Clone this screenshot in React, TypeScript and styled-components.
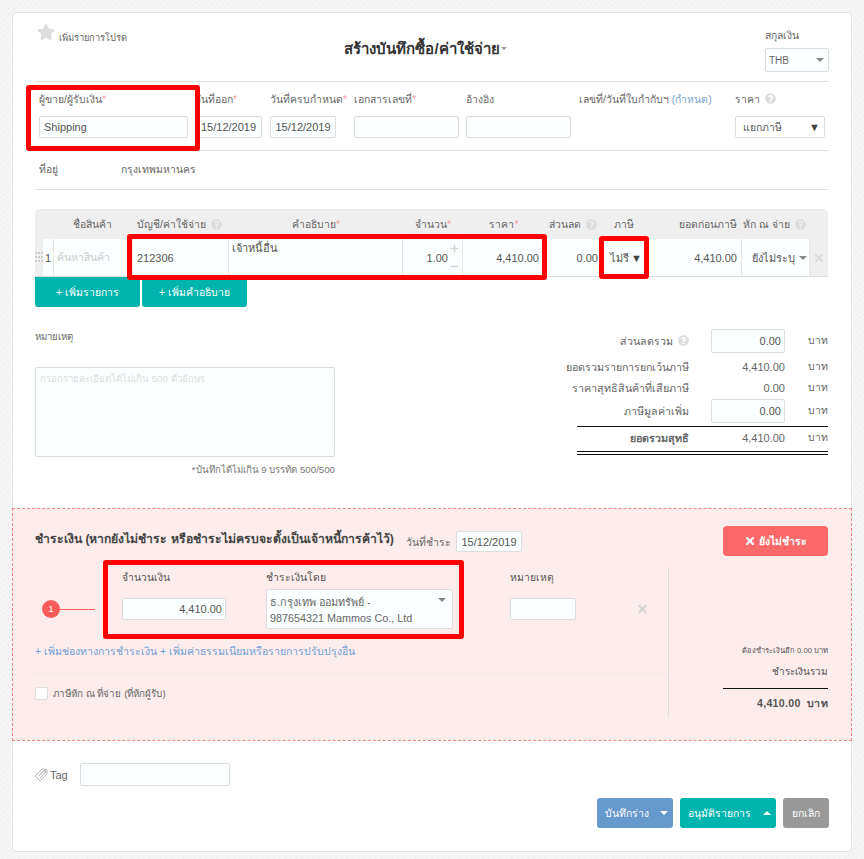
import React from "react";
import styled, { createGlobalStyle } from "styled-components";
import { FaStar, FaQuestionCircle, FaTimes, FaPlus, FaMinus } from "react-icons/fa";

const GlobalStyle = createGlobalStyle`
  html, body {
    margin: 0;
    padding: 0;
  }

  body {
    background-color: #f6f6f6;
    background-image: repeating-linear-gradient(135deg, #f1f1f1 0 1px, transparent 1px 4px);
    font-family: "Liberation Sans", "Noto Sans", sans-serif;
    font-size: 10.4px;
    color: #666;
  }

  * {
    box-sizing: border-box;
  }
`;

const Page = styled.div`
  padding: 12px;
  height: 859px;
  overflow: hidden;
`;

const Card = styled.div`
  position: relative;
  width: 840px;
  height: 840px;
  background: #fff;
  border: 1px solid #e3e3e3;
  border-radius: 5px;
`;

const Highlight = styled.div<{ $x: number; $y: number; $w: number; $h: number }>`
  position: absolute;
  left: ${(p) => p.$x - 13}px;
  top: ${(p) => p.$y - 13}px;
  width: ${(p) => p.$w}px;
  height: ${(p) => p.$h}px;
  border: 5px solid #fe0000;
  border-radius: 3px;
  pointer-events: none;
`;

const Top = styled.div`
  padding: 0 23px 0 22px;
`;

const Header = styled.div`
  display: flex;
  height: 69px;
  border-bottom: 1px solid #ddd;
`;

const Favorite = styled.div`
  width: 110px;
  display: flex;
  align-items: flex-start;
  padding: 10px 0 0 2px;
  font-size: 9.3px;
  color: #666;
  white-space: nowrap;

  svg {
    color: #ddd;
    font-size: 18px;
    margin-right: 4px;
  }

  span {
    margin-top: 7px;
  }
`;

const Title = styled.div`
  flex: 1;
  padding-top: 24px;
  padding-right: 59px;
  text-align: center;
  font-size: 15px;
  font-weight: bold;
  color: #333;
`;

const TitleCaret = styled.i`
  display: inline-block;
  margin-left: 1px;
  vertical-align: 4px;
  border-left: 3px solid transparent;
  border-right: 3px solid transparent;
  border-top: 3px solid #999;
`;

const Currency = styled.div`
  width: 64px;
  padding-top: 14px;
  margin-right: -1px;
  color: #666;
`;

const CurrencySelect = styled.div`
  display: flex;
  align-items: center;
  justify-content: space-between;
  height: 24px;
  margin-top: 4px;
  padding: 0 4px 0 3px;
  background: #fbffff;
  border: 1px solid #ddd;
  border-radius: 2px;
  font-size: 10px;
  color: #666;
`;

const Caret = styled.i`
  display: block;
  flex: none;
  border-left: 4px solid transparent;
  border-right: 4px solid transparent;
  border-top: 4px solid #888;
`;

const FieldRow = styled.div`
  display: flex;
  height: 69px;
  padding-top: 10px;
  border-bottom: 1px solid #ddd;
`;

const Field = styled.div<{ $width: number; $left: number }>`
  width: ${(p) => p.$width}px;
  margin-left: ${(p) => p.$left}px;
  flex: none;
`;

const Label = styled.div`
  height: 24px;
  line-height: 16px;
  white-space: nowrap;
  color: #666;
`;

const Req = styled.span`
  color: #f5a3a3;
`;

const Link = styled.span`
  color: #7aa3cc;
`;

const Input = styled.div<{ $align?: string }>`
  display: flex;
  align-items: center;
  justify-content: ${(p) => p.$align || "flex-start"};
  height: 22px;
  padding: 0 4px;
  background: #fbffff;
  border: 1px solid #ddd;
  border-radius: 2px;
  font-size: 11px;
  color: #555;
  white-space: nowrap;
`;

const NativeSelect = styled(Input)`
  justify-content: space-between;
  padding: 0 4px 0 7px;
  background: #fff;
  font-size: 10.4px;
`;

const Glyph = styled.span`
  font-size: 11px;
  color: #444;
`;

const Help = styled(FaQuestionCircle)`
  color: #ddd;
  font-size: 11px;
  margin-left: 5px;
  vertical-align: -1px;
`;

const AddressRow = styled.div`
  display: flex;
  align-items: center;
  height: 39px;
  padding: 0 0 2px 4px;
  border-bottom: 1px solid #ddd;
  color: #666;

  span:first-child {
    width: 82px;
  }
`;

const LineTable = styled.div`
  margin-top: 19px;
  border-top: 1px solid #e6e6e6;
  border-radius: 5px 5px 0 0;
  overflow: hidden;
`;

const tableColumns = "8px 11px 79px 96px 174px 60px 82px 55px 48px 94px 68px 18px";

const HeadRow = styled.div`
  display: grid;
  grid-template-columns: ${tableColumns};
  height: 29px;
  background: #efefef;
  color: #666;
`;

const HeadCell = styled.div<{ $span?: number; $align?: string; $pad?: string }>`
  grid-column: span ${(p) => p.$span || 1};
  display: flex;
  align-items: center;
  justify-content: ${(p) => p.$align || "center"};
  padding: ${(p) => p.$pad || "0"};
  white-space: nowrap;
`;

const BodyRow = styled.div`
  display: grid;
  grid-template-columns: ${tableColumns};
  height: 38px;
  border-bottom: 1px solid #ddd;
  background: #fbffff;
`;

const Grip = styled.div`
  display: grid;
  grid-template-columns: repeat(3, 2px);
  grid-auto-rows: 2px;
  gap: 2px 1px;
  align-content: center;
  padding-bottom: 2px;
  background: #efefef;
`;

const GripDot = styled.i`
  background: #ccc;
`;

const Cell = styled.div<{ $align?: string; $start?: boolean; $pad?: string }>`
  display: flex;
  align-items: ${(p) => (p.$start ? "flex-start" : "center")};
  justify-content: ${(p) => p.$align || "flex-start"};
  padding: ${(p) => p.$pad || "0 3px"};
  border-right: 1px solid #e6e6e6;
  font-size: 11px;
  white-space: nowrap;
  overflow: hidden;
  color: #555;
`;

const Placeholder = styled.span`
  color: #ccc;
  font-size: 10.6px;
`;

const Stepper = styled.div`
  display: flex;
  flex-direction: column;
  justify-content: space-between;
  align-self: stretch;
  padding: 5px 0;
  margin-left: 2px;
  color: #d5d5d5;
  font-size: 9px;
`;

const DeleteCell = styled.div`
  display: flex;
  align-items: center;
  justify-content: center;
  background: #efefef;
  color: #ddd;
  font-size: 12px;
`;

const AddButtons = styled.div`
  display: flex;
  gap: 2px;
`;

const AddButton = styled.div`
  display: flex;
  align-items: center;
  justify-content: center;
  width: 105px;
  height: 30px;
  background: #00b5ad;
  border-radius: 0 0 3px 3px;
  color: #fff;
`;

const Middle = styled.div`
  display: flex;
  justify-content: space-between;
  height: 201px;
`;

const Notes = styled.div`
  width: 300px;
  padding-top: 22px;
  font-size: 9.7px;
  color: #666;
`;

const NoteLabel = styled.div`
  height: 38px;
`;

const NoteArea = styled.div`
  height: 90px;
  padding: 3px 4px;
  background: #fbffff;
  border: 1px solid #ddd;
  border-radius: 2px;
  color: #ddd;
`;

const NoteHint = styled.div`
  margin-top: 5px;
  text-align: right;
  color: #777;
`;

const Summary = styled.div`
  width: 293px;
  padding-top: 22px;
  display: grid;
  grid-template-columns: 154px 96px 43px;
  grid-auto-rows: auto;
  align-items: center;
  align-content: start;
  line-height: 14px;
  color: #666;
`;

const SumLabel = styled.div<{ $bold?: boolean }>`
  text-align: right;
  white-space: nowrap;
  font-size: 10.7px;
  font-weight: ${(p) => (p.$bold ? "bold" : "normal")};
`;

const SumValue = styled.div`
  display: flex;
  justify-content: flex-end;
  font-size: 11px;
`;

const SumInput = styled(Input)`
  width: 74px;
  height: 24px;
  justify-content: flex-end;
  padding: 0 3px 0 4px;
`;

const SumUnit = styled.div`
  text-align: right;
`;

const SumSpacer = styled.div<{ $height: number }>`
  grid-column: 1 / -1;
  height: ${(p) => p.$height}px;
`;

const SumRule = styled.div`
  grid-column: 1 / -1;
  height: 1px;
  margin-left: 42px;
  background: #111;
`;

const SumDouble = styled.div`
  grid-column: 1 / -1;
  height: 4px;
  margin-left: 42px;
  border-top: 1px solid #111;
  border-bottom: 1px solid #111;
`;

const Payment = styled.div`
  height: 233px;
  margin: 0 -1px;
  padding: 17px 23px 0 22px;
  background: #fdecec;
  border: 1px dashed #e88;
`;

const PayHead = styled.div`
  display: flex;
  align-items: flex-start;
  height: 30px;
`;

const PayTitle = styled.div`
  width: 371px;
  padding-top: 3px;
  font-size: 12.2px;
  font-weight: bold;
  color: #444;
  white-space: nowrap;
`;

const PayDateLabel = styled.div`
  width: 50px;
  padding-top: 8px;
  white-space: nowrap;
  color: #666;
`;

const PayDate = styled(Input)`
  width: 66px;
  height: 21px;
  margin-top: 5px;
  justify-content: center;
  padding: 0;
`;

const UnpaidButton = styled.div`
  margin-left: auto;
  width: 105px;
  height: 30px;
  display: flex;
  align-items: center;
  justify-content: center;
  gap: 3px;
  background: #fa6868;
  border-radius: 4px;
  color: #fff;
  font-weight: bold;

  svg {
    font-size: 12px;
  }
`;

const PayBody = styled.div`
  display: flex;
  height: 150px;
  margin-top: 11px;
`;

const PayLeft = styled.div`
  width: 635px;
  border-right: 1px solid #ddd;
`;

const PayRow = styled.div`
  display: flex;
  height: 62px;
`;

const Step = styled.div`
  display: flex;
  align-items: center;
  width: 53px;
  height: 40px;
  margin: 22px 0 0 7px;
`;

const Badge = styled.div`
  flex: none;
  width: 18px;
  height: 18px;
  display: flex;
  align-items: center;
  justify-content: center;
  background: #fa5c5c;
  border-radius: 50%;
  color: #fff;
  font-size: 9px;
`;

const StepLine = styled.div`
  flex: 1;
  height: 1px;
  background: #fa5c5c;
`;

const PayField = styled.div<{ $width: number; $left: number }>`
  width: ${(p) => p.$width}px;
  margin-left: ${(p) => p.$left}px;
  flex: none;
`;

const PayLabel = styled.div`
  height: 22px;
  line-height: 21px;
  color: #555;
`;

const Control = styled.div`
  height: 40px;
  display: flex;
  align-items: center;
`;

const PayInput = styled(Input)`
  width: 100%;
  padding: 0 3px;
`;

const BankSelect = styled.div`
  position: relative;
  width: 100%;
  height: 40px;
  padding: 4px 3px 0;
  background: #fbffff;
  border: 1px solid #ddd;
  border-radius: 2px;
  line-height: 16px;
  color: #666;
  font-size: 10.8px;
  white-space: nowrap;

  ${Caret} {
    position: absolute;
    top: 8px;
    right: 6px;
  }
`;

const RemoveX = styled.div`
  width: 11px;
  height: 40px;
  margin: 22px 0 0 61px;
  display: flex;
  align-items: center;
  color: #d5d5d5;
  font-size: 12px;
`;

const PayLinks = styled.div`
  height: 45px;
  padding-top: 14px;
  border-bottom: 1px solid #f3e6e6;
  font-size: 10.6px;
  color: #6f9fd4;
`;

const CheckRow = styled.div`
  display: flex;
  align-items: center;
  gap: 5px;
  padding-top: 12px;
  font-size: 9.8px;
  color: #666;
`;

const CheckBox = styled.i`
  flex: none;
  width: 13px;
  height: 13px;
  background: #fff;
  border: 1px solid #ddd;
  border-radius: 2px;
`;

const PayTotal = styled.div`
  width: 105px;
  margin-left: 54px;
  padding-top: 77px;
  text-align: right;
  color: #555;
`;

const DueNote = styled.div`
  font-size: 7.6px;
  height: 14px;
  white-space: nowrap;
`;

const TotalLabel = styled.div`
  height: 31px;
  padding-top: 6px;
  border-bottom: 1px solid #111;
  font-size: 10px;
`;

const TotalValue = styled.div`
  padding-top: 6px;
  font-weight: bold;
  font-size: 10.6px;
  letter-spacing: 0.3px;
  white-space: nowrap;
`;

const Footer = styled.div`
  padding: 22px 22px 0 21px;
`;

const TagRow = styled.div`
  display: flex;
  align-items: center;
  height: 23px;
  font-size: 11px;
  color: #666;

  svg {
    color: #bbb;
    margin-right: 2px;
  }
`;

const TagInput = styled(Input)`
  width: 150px;
  height: 23px;
  margin-left: 12px;
`;

const Actions = styled.div`
  display: flex;
  justify-content: flex-end;
  gap: 7px;
  margin-top: 12px;
`;

const Action = styled.div<{ $color: string; $width: number; $center?: boolean }>`
  display: flex;
  align-items: center;
  justify-content: ${(p) => (p.$center ? "center" : "space-between")};
  width: ${(p) => p.$width}px;
  height: 30px;
  padding: ${(p) => (p.$center ? "0" : "0 5px 0 8px")};
  background: ${(p) => p.$color};
  border-radius: 3px;
  color: #fff;
  white-space: nowrap;
`;

const WhiteDown = styled.i`
  border-left: 4px solid transparent;
  border-right: 4px solid transparent;
  border-top: 4px solid #fff;
`;

const WhiteUp = styled.i`
  border-left: 4px solid transparent;
  border-right: 4px solid transparent;
  border-bottom: 4px solid #fff;
`;

const TagIcon = () => (
  <svg width="14" height="14" viewBox="0 0 14 14" fill="none" stroke="currentColor" strokeWidth="1">
    <path d="M13 1.5 8 1 1 8l5 5 7-7z" />
    <path d="M11.5 1 4 8.5M13 3 5.5 10.5" />
    <circle cx="10.8" cy="3.2" r="0.8" />
  </svg>
);

const App = (): JSX.Element => {
  return (
    <Page>
      <GlobalStyle />
      <Card>
        <Top>
          <Header>
            <Favorite>
              <FaStar />
              <span>เพิ่มรายการโปรด</span>
            </Favorite>
            <Title>
              สร้างบันทึกซื้อ/ค่าใช้จ่าย
              <TitleCaret />
            </Title>
            <Currency>
              สกุลเงิน
              <CurrencySelect>
                THB
                <Caret />
              </CurrencySelect>
            </Currency>
          </Header>

          <FieldRow>
            <Field $width={149} $left={4}>
              <Label>
                ผู้ขาย/ผู้รับเงิน<Req>*</Req>
              </Label>
              <Input>Shipping</Input>
            </Field>
            <Field $width={67} $left={7}>
              <Label>
                วันที่ออก<Req>*</Req>
              </Label>
              <Input $align="center">15/12/2019</Input>
            </Field>
            <Field $width={66} $left={8}>
              <Label>
                วันที่ครบกำหนด<Req>*</Req>
              </Label>
              <Input $align="center">15/12/2019</Input>
            </Field>
            <Field $width={105} $left={18}>
              <Label>
                เอกสารเลขที่<Req>*</Req>
              </Label>
              <Input />
            </Field>
            <Field $width={105} $left={7}>
              <Label>อ้างอิง</Label>
              <Input />
            </Field>
            <Field $width={150} $left={8}>
              <Label>
                เลขที่/วันที่ใบกำกับฯ <Link>(กำหนด)</Link>
              </Label>
            </Field>
            <Field $width={90} $left={6}>
              <Label>
                ราคา
                <Help />
              </Label>
              <NativeSelect>
                แยกภาษี
                <Glyph>▼</Glyph>
              </NativeSelect>
            </Field>
          </FieldRow>

          <AddressRow>
            <span>ที่อยู่</span>
            <span>กรุงเทพมหานคร</span>
          </AddressRow>

          <LineTable>
            <HeadRow>
              <HeadCell $span={3} $pad="0 0 0 17px">
                ชื่อสินค้า
              </HeadCell>
              <HeadCell $align="flex-start" $pad="0 0 0 4px">
                บัญชี/ค่าใช้จ่าย
                <Help />
              </HeadCell>
              <HeadCell>
                คำอธิบาย<Req>*</Req>
              </HeadCell>
              <HeadCell>
                จำนวน<Req>*</Req>
              </HeadCell>
              <HeadCell>
                ราคา<Req>*</Req>
              </HeadCell>
              <HeadCell>
                ส่วนลด
                <Help />
              </HeadCell>
              <HeadCell>ภาษี</HeadCell>
              <HeadCell $align="flex-end" $pad="0 5px 0 0">
                ยอดก่อนภาษี
              </HeadCell>
              <HeadCell $span={2} $align="flex-start" $pad="0 0 0 1px">
                หัก ณ จ่าย
                <Help />
              </HeadCell>
            </HeadRow>
            <BodyRow>
              <Grip>
                {Array.from({ length: 9 }).map((_, i) => (
                  <GripDot key={i} />
                ))}
              </Grip>
              <Cell $align="center" $pad="0">
                1
              </Cell>
              <Cell>
                <Placeholder>ค้นหาสินค้า</Placeholder>
              </Cell>
              <Cell $pad="0 3px 0 4px">212306</Cell>
              <Cell $start>เจ้าหนี้อื่น</Cell>
              <Cell $align="flex-end">
                1.00
                <Stepper>
                  <FaPlus />
                  <FaMinus />
                </Stepper>
              </Cell>
              <Cell $align="flex-end" $pad="0 5px 0 0">
                4,410.00
              </Cell>
              <Cell $align="flex-end" $pad="0 1px 0 0">
                0.00
              </Cell>
              <Cell $align="space-between" $pad="0 5px 0 10px">
                ไม่รี
                <Glyph>▼</Glyph>
              </Cell>
              <Cell $align="flex-end" $pad="0 4px 0 0">
                4,410.00
              </Cell>
              <Cell $align="space-between" $pad="0 2px 0 10px">
                ยังไม่ระบุ
                <Caret />
              </Cell>
              <DeleteCell>
                <FaTimes />
              </DeleteCell>
            </BodyRow>
          </LineTable>

          <AddButtons>
            <AddButton>+ เพิ่มรายการ</AddButton>
            <AddButton>+ เพิ่มคำอธิบาย</AddButton>
          </AddButtons>

          <Middle>
            <Notes>
              <NoteLabel>หมายเหตุ</NoteLabel>
              <NoteArea>กรอกรายละเอียดได้ไม่เกิน 500 ตัวอักษร</NoteArea>
              <NoteHint>*บันทึกได้ไม่เกิน 9 บรรทัด 500/500</NoteHint>
            </Notes>
            <Summary>
              <SumLabel>
                ส่วนลดรวม
                <Help />
              </SumLabel>
              <SumValue>
                <SumInput>0.00</SumInput>
              </SumValue>
              <SumUnit>บาท</SumUnit>
              <SumSpacer $height={7} />
              <SumLabel>ยอดรวมรายการยกเว้นภาษี</SumLabel>
              <SumValue>4,410.00</SumValue>
              <SumUnit>บาท</SumUnit>
              <SumSpacer $height={7} />
              <SumLabel>ราคาสุทธิสินค้าที่เสียภาษี</SumLabel>
              <SumValue>0.00</SumValue>
              <SumUnit>บาท</SumUnit>
              <SumSpacer $height={4} />
              <SumLabel>ภาษีมูลค่าเพิ่ม</SumLabel>
              <SumValue>
                <SumInput>0.00</SumInput>
              </SumValue>
              <SumUnit>บาท</SumUnit>
              <SumSpacer $height={3} />
              <SumRule />
              <SumSpacer $height={4} />
              <SumLabel $bold>ยอดรวมสุทธิ</SumLabel>
              <SumValue>4,410.00</SumValue>
              <SumUnit>บาท</SumUnit>
              <SumSpacer $height={6} />
              <SumDouble />
            </Summary>
          </Middle>
        </Top>

        <Payment>
          <PayHead>
            <PayTitle>ชำระเงิน (หากยังไม่ชำระ หรือชำระไม่ครบจะตั้งเป็นเจ้าหนี้การค้าไว้)</PayTitle>
            <PayDateLabel>วันที่ชำระ</PayDateLabel>
            <PayDate>15/12/2019</PayDate>
            <UnpaidButton>
              <FaTimes />
              ยังไม่ชำระ
            </UnpaidButton>
          </PayHead>
          <PayBody>
            <PayLeft>
              <PayRow>
                <Step>
                  <Badge>1</Badge>
                  <StepLine />
                </Step>
                <PayField $width={104} $left={27}>
                  <PayLabel>จำนวนเงิน</PayLabel>
                  <Control>
                    <PayInput $align="flex-end">4,410.00</PayInput>
                  </Control>
                </PayField>
                <PayField $width={187} $left={40}>
                  <PayLabel>ชำระเงินโดย</PayLabel>
                  <BankSelect>
                    ธ.กรุงเทพ ออมทรัพย์ -
                    <br />
                    987654321 Mammos Co., Ltd
                    <Caret />
                  </BankSelect>
                </PayField>
                <PayField $width={66} $left={57}>
                  <PayLabel>หมายเหตุ</PayLabel>
                  <Control>
                    <PayInput />
                  </Control>
                </PayField>
                <RemoveX>
                  <FaTimes />
                </RemoveX>
              </PayRow>
              <PayLinks>+ เพิ่มช่องทางการชำระเงิน + เพิ่มค่าธรรมเนียมหรือรายการปรับปรุงอื่น</PayLinks>
              <CheckRow>
                <CheckBox />
                ภาษีหัก ณ ที่จ่าย (ที่หักผู้รับ)
              </CheckRow>
            </PayLeft>
            <PayTotal>
              <DueNote>ต้องชำระเงินอีก 0.00 บาท</DueNote>
              <TotalLabel>ชำระเงินรวม</TotalLabel>
              <TotalValue>4,410.00&nbsp;&nbsp;บาท</TotalValue>
            </PayTotal>
          </PayBody>
        </Payment>

        <Footer>
          <TagRow>
            <TagIcon />
            Tag
            <TagInput />
          </TagRow>
          <Actions>
            <Action $color="#6699cc" $width={76}>
              บันทึกร่าง
              <WhiteDown />
            </Action>
            <Action $color="#00b5ad" $width={96}>
              อนุมัติรายการ
              <WhiteUp />
            </Action>
            <Action $color="#999" $width={46} $center>
              ยกเลิก
            </Action>
          </Actions>
        </Footer>

        <Highlight $x={26} $y={85} $w={174} $h={66} />
        <Highlight $x={127} $y={234} $w={420} $h={46} />
        <Highlight $x={599} $y={236} $w={50} $h={43} />
        <Highlight $x={103} $y={560} $w={361} $h={79} />
      </Card>
    </Page>
  );
};

export default App;
